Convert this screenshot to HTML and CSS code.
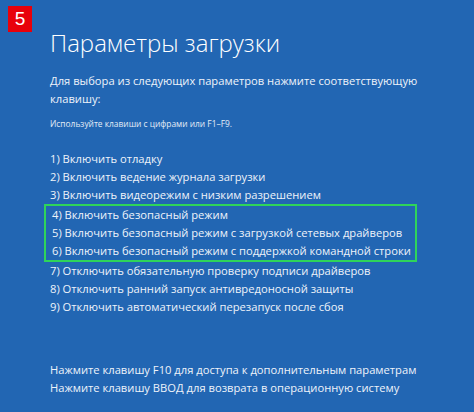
FILE: index.html
```html
<!DOCTYPE html>
<html lang="ru">
<head>
<meta charset="utf-8">
<link rel="stylesheet" href="styles.css">
</head>
<body>
<div class="screen">
  <div class="badge">5</div>
  <h1 class="title">Параметры загрузки</h1>
  <p class="lead">Для выбора из следующих параметров нажмите соответствующую клавишу:</p>
  <p class="hint">Используйте клавиши с цифрами или F1–F9.</p>
  <ul class="options">
    <li>1) Включить отладку</li>
    <li>2) Включить ведение журнала загрузки</li>
    <li>3) Включить видеорежим с низким разрешением</li>
    <li class="group">
      <ul class="highlight">
        <li>4) Включить безопасный режим</li>
        <li>5) Включить безопасный режим с загрузкой сетевых драйверов</li>
        <li>6) Включить безопасный режим с поддержкой командной строки</li>
      </ul>
    </li>
    <li>7) Отключить обязательную проверку подписи драйверов</li>
    <li>8) Отключить ранний запуск антивредоносной защиты</li>
    <li>9) Отключить автоматический перезапуск после сбоя</li>
  </ul>
  <div class="footer">
    <p>Нажмите клавишу F10 для доступа к дополнительным параметрам</p>
    <p>Нажмите клавишу ВВОД для возврата в операционную систему</p>
  </div>
</div>
</body>
</html>
```
FILE: styles.css
```css
html, body {
  margin: 0;
  padding: 0;
  background: #2266b3;
}
.screen {
  position: relative;
  width: 474px;
  height: 412px;
  box-sizing: border-box;
  padding: 26px 0 0 50px;
  background: #2266b3;
  color: #fff;
  font-family: "Open Sans", "Noto Sans", sans-serif;
  overflow: hidden;
}
.badge {
  position: absolute;
  left: 8px;
  top: 6px;
  width: 24px;
  height: 26px;
  background: #e8000b;
  color: #fff;
  font-family: "Liberation Sans", sans-serif;
  font-size: 19px;
  line-height: 26px;
  text-align: center;
}
.title {
  margin: 0;
  font-size: 24px;
  font-weight: 300;
  line-height: 34px;
}
.lead {
  margin: 12px 0 0;
  width: 380px;
  font-size: 11.2px;
  line-height: 18px;
  color: #eef3fa;
}
.hint {
  margin: 9px 0 0;
  font-size: 8.4px;
  line-height: 14px;
  color: #e4ecf6;
}
.options {
  list-style: none;
  margin: 19px 0 0;
  padding: 0;
  font-size: 11.2px;
  line-height: 18px;
  color: #eef3fa;
}
.options li { white-space: nowrap; }
.highlight {
  list-style: none;
  margin: 0 0 0 -6px;
  padding: 0 4px 0 6px;
  width: fit-content;
  border: 2px solid #2fd45a;
}
.footer {
  margin-top: 45px;
  font-size: 11.2px;
  line-height: 17.5px;
  color: #eef3fa;
}
.footer p { margin: 0; }
```
